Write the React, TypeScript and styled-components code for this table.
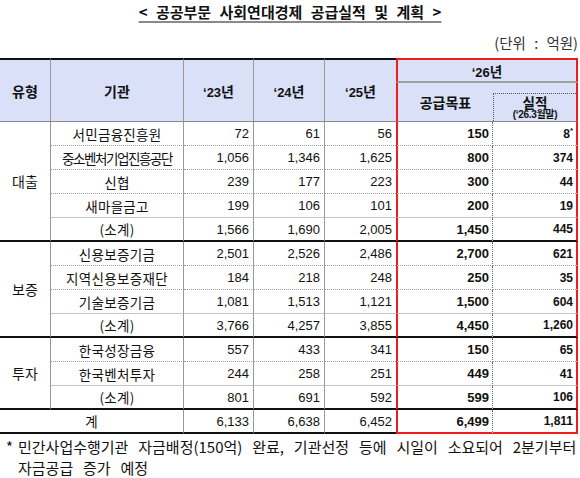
import React from 'react';
import styled, { createGlobalStyle, css } from 'styled-components';

const GlobalStyle = createGlobalStyle`
  html, body {
    margin: 0;
    padding: 0;
    background: #fff;
  }
  body {
    font-family: "Noto Sans CJK KR", "Liberation Sans", sans-serif;
    color: #111;
  }
`;

const Page = styled.div`
  width: 580px;
  height: 478px;
  overflow: hidden;
`;

const Title = styled.h1`
  margin: 0;
  height: 24px;
  line-height: 24px;
  text-align: center;
  font-size: 15px;
  font-weight: 700;
  word-spacing: 5px;
  text-decoration: underline;
  text-decoration-color: #8a8a8a;
  text-decoration-thickness: 2px;
  text-underline-offset: 3px;
`;

const Unit = styled.div`
  margin-top: 9px;
  height: 20px;
  line-height: 20px;
  text-align: right;
  padding-right: 2px;
  font-size: 14.5px;
  word-spacing: 5px;
  color: #333;
`;

const Table = styled.table`
  margin-top: 5px;
  width: 578px;
  table-layout: fixed;
  border-collapse: separate;
  border-spacing: 0;
  font-size: 13px;
`;

type HeadKind = 'plain' | 'last' | 'year26' | 'goal' | 'actual';

const Th = styled.th<{ $kind?: HeadKind }>`
  box-sizing: border-box;
  background: #d9e0f7;
  font-weight: 700;
  font-size: 14px;
  padding: 0;
  text-align: center;
  vertical-align: middle;
  border-bottom: 1px solid #888;
  ${({ $kind = 'plain' }) => {
    switch ($kind) {
      case 'plain':
        return css`
          border-top: 2px solid #111;
          border-right: 1px solid #999;
        `;
      case 'last':
        return css`
          border-top: 2px solid #111;
        `;
      case 'year26':
        return css`
          border-top: 2px solid #f01c1c;
          border-left: 2px solid #f01c1c;
          border-right: 2px solid #f01c1c;
          border-bottom: 2px solid #a0a0a0;
          font-size: 13.5px;
        `;
      case 'goal':
        return css`
          border-left: 2px solid #f01c1c;
        `;
      case 'actual':
        return css`
          border-right: 2px solid #f01c1c;
          vertical-align: bottom;
        `;
    }
  }}
`;

const YearLabel = styled.span`
  font-family: "Liberation Sans", "Noto Sans CJK KR", sans-serif;
  font-size: 13px;
`;

const ActualBox = styled.div`
  height: 27px;
  border-top: 1px dotted #555;
  border-left: 1px dotted #555;
  display: flex;
  flex-direction: column;
  align-items: center;
  justify-content: flex-start;
`;

const ActualMain = styled.span`
  font-size: 13.5px;
  line-height: 16px;
  height: 16px;
`;

const ActualSub = styled.span`
  font-family: "Liberation Sans", "Noto Sans CJK KR", sans-serif;
  font-size: 10px;
  line-height: 10px;
  height: 10px;
  letter-spacing: -0.3px;
`;

type Edge = 'dot' | 'line' | 'thick' | 'end';
type CellKind = 'group' | 'name' | 'num' | 'last' | 'goal' | 'actual';

const edgeStyle = (edge: Edge, red: boolean) => {
  if (edge === 'dot') return css`border-bottom: 1px dotted #9a9a9a;`;
  if (edge === 'line') return css`border-bottom: 1px solid #c4c4c4;`;
  if (edge === 'end' && red) return css`border-bottom: 2px solid #f01c1c;`;
  return css`border-bottom: 2px solid #111;`;
};

const Td = styled.td<{ $kind: CellKind; $edge: Edge }>`
  box-sizing: border-box;
  padding: 0;
  height: 24px;
  vertical-align: middle;
  ${({ $kind }) => {
    switch ($kind) {
      case 'group':
        return css`
          text-align: center;
          font-size: 14px;
          border-right: 1px solid #999;
        `;
      case 'name':
        return css`
          text-align: center;
          font-size: 13.5px;
          letter-spacing: 0.3px;
          border-right: 1px solid #999;
        `;
      case 'num':
        return css`
          text-align: right;
          padding-right: 4px;
          font-family: "Liberation Sans", sans-serif;
          border-right: 1px solid #999;
        `;
      case 'last':
        return css`
          text-align: right;
          padding-right: 4px;
          font-family: "Liberation Sans", sans-serif;
        `;
      case 'goal':
        return css`
          text-align: right;
          padding-right: 3px;
          font-family: "Liberation Sans", sans-serif;
          font-weight: 700;
          border-left: 2px solid #f01c1c;
          border-right: 1px dotted #666;
        `;
      case 'actual':
        return css`
          text-align: right;
          padding-right: 3px;
          font-family: "Liberation Sans", sans-serif;
          font-weight: 700;
          font-size: 12px;
          border-right: 2px solid #f01c1c;
        `;
    }
  }}
  ${({ $edge, $kind }) => edgeStyle($edge, $kind === 'goal' || $kind === 'actual')}
`;

const Tight = styled.span`
  letter-spacing: -1.4px;
`;

const Star = styled.sup`
  font-size: 8px;
  vertical-align: 5px;
  line-height: 0;
`;

const Note = styled.div`
  margin-top: 2px;
  display: flex;
  font-size: 15px;
  line-height: 21px;
  word-spacing: 6.5px;
  color: #111;
  white-space: nowrap;
`;

const NoteMark = styled.span`
  width: 18px;
  padding-left: 6px;
  box-sizing: border-box;
  flex-shrink: 0;
`;

const NoteText = styled.span`
  flex: 1;
`;

type Row = {
  name: string;
  tight?: boolean;
  v: [string, string, string, string, string];
  star?: boolean;
};

type Group = { label: string; rows: Row[] };

const groups: Group[] = [
  {
    label: '대출',
    rows: [
      { name: '서민금융진흥원', v: ['72', '61', '56', '150', '8'], star: true },
      { name: '중소벤처기업진흥공단', tight: true, v: ['1,056', '1,346', '1,625', '800', '374'] },
      { name: '신협', v: ['239', '177', '223', '300', '44'] },
      { name: '새마을금고', v: ['199', '106', '101', '200', '19'] },
      { name: '(소계)', v: ['1,566', '1,690', '2,005', '1,450', '445'] },
    ],
  },
  {
    label: '보증',
    rows: [
      { name: '신용보증기금', v: ['2,501', '2,526', '2,486', '2,700', '621'] },
      { name: '지역신용보증재단', v: ['184', '218', '248', '250', '35'] },
      { name: '기술보증기금', v: ['1,081', '1,513', '1,121', '1,500', '604'] },
      { name: '(소계)', v: ['3,766', '4,257', '3,855', '4,450', '1,260'] },
    ],
  },
  {
    label: '투자',
    rows: [
      { name: '한국성장금융', v: ['557', '433', '341', '150', '65'] },
      { name: '한국벤처투자', v: ['244', '258', '251', '449', '41'] },
      { name: '(소계)', v: ['801', '691', '592', '599', '106'] },
    ],
  },
];

const total: [string, string, string, string, string] = ['6,133', '6,638', '6,452', '6,499', '1,811'];

const numKinds: CellKind[] = ['num', 'num', 'last', 'goal', 'actual'];

const App = () => {
  const body: React.ReactNode[] = [];

  groups.forEach((g) => {
    g.rows.forEach((r, i) => {
      const n = g.rows.length;
      const edge: Edge = i === n - 1 ? 'thick' : i === n - 2 ? 'line' : 'dot';
      body.push(
        <tr key={`${g.label}-${i}`}>
          {i === 0 && (
            <Td $kind="group" $edge="thick" rowSpan={n}>
              {g.label}
            </Td>
          )}
          <Td $kind="name" $edge={edge}>
            {r.tight ? <Tight>{r.name}</Tight> : r.name}
          </Td>
          {r.v.map((val, j) => (
            <Td key={j} $kind={numKinds[j]} $edge={edge}>
              {val}
              {j === 4 && r.star ? <Star>*</Star> : null}
            </Td>
          ))}
        </tr>
      );
    });
  });

  return (
    <Page>
      <GlobalStyle />
      <Title>&lt; 공공부문 사회연대경제 공급실적 및 계획 &gt;</Title>
      <Unit>(단위 : 억원)</Unit>
      <Table>
        <colgroup>
          <col style={{ width: 51 }} />
          <col style={{ width: 133 }} />
          <col style={{ width: 70 }} />
          <col style={{ width: 71 }} />
          <col style={{ width: 71 }} />
          <col style={{ width: 97 }} />
          <col style={{ width: 85 }} />
        </colgroup>
        <thead>
          <tr style={{ height: 25 }}>
            <Th rowSpan={2}>유형</Th>
            <Th rowSpan={2}>기관</Th>
            <Th rowSpan={2}><YearLabel>‘23</YearLabel>년</Th>
            <Th rowSpan={2}><YearLabel>‘24</YearLabel>년</Th>
            <Th rowSpan={2} $kind="last"><YearLabel>‘25</YearLabel>년</Th>
            <Th colSpan={2} $kind="year26"><YearLabel>‘26</YearLabel>년</Th>
          </tr>
          <tr style={{ height: 39 }}>
            <Th $kind="goal">공급목표</Th>
            <Th $kind="actual">
              <ActualBox>
                <ActualMain>실적</ActualMain>
                <ActualSub>(‘26.3월말)</ActualSub>
              </ActualBox>
            </Th>
          </tr>
        </thead>
        <tbody>
          {body}
          <tr>
            <Td $kind="name" $edge="end" colSpan={2}>계</Td>
            {total.map((val, j) => (
              <Td key={j} $kind={numKinds[j]} $edge="end">
                {val}
              </Td>
            ))}
          </tr>
        </tbody>
      </Table>
      <Note>
        <NoteMark>*</NoteMark>
        <NoteText>
          민간사업수행기관 자금배정(150억) 완료, 기관선정 등에 시일이 소요되어 2분기부터
          <br />
          자금공급 증가 예정
        </NoteText>
      </Note>
    </Page>
  );
};

export default App;
